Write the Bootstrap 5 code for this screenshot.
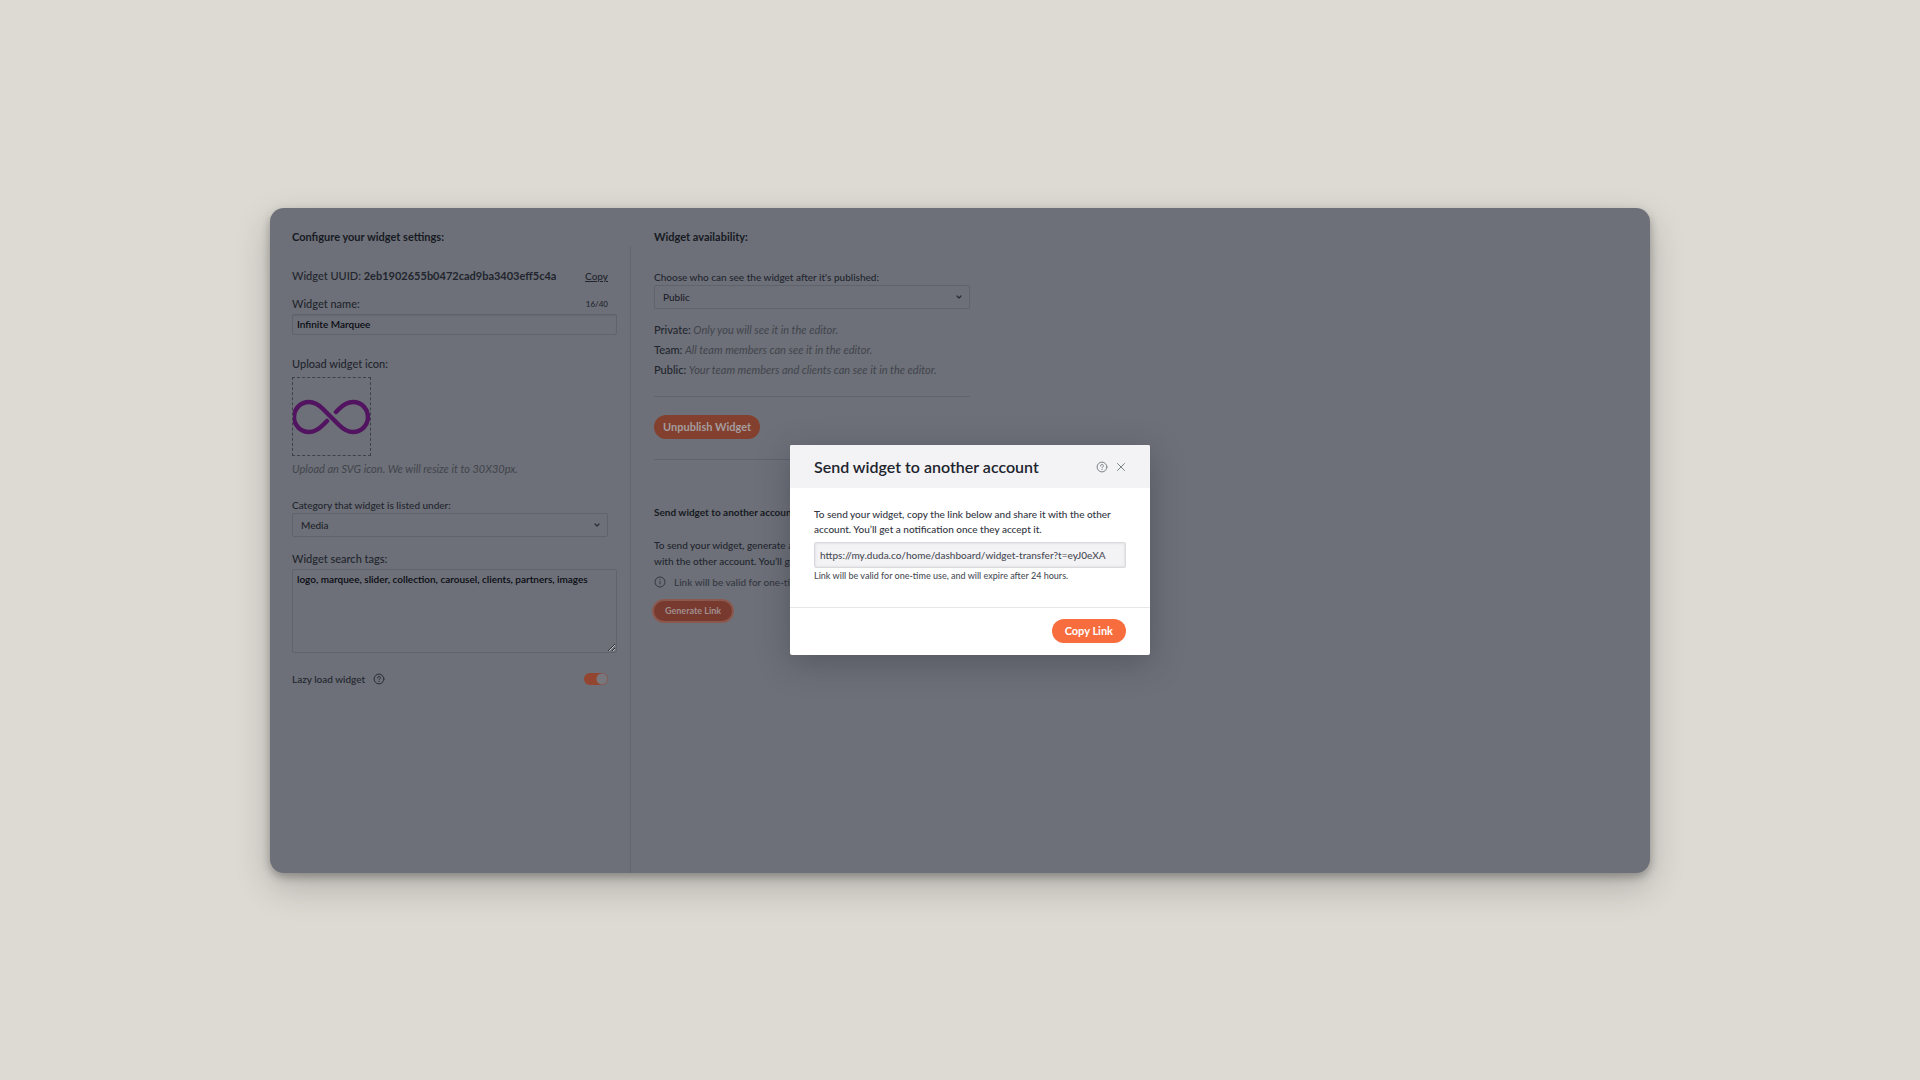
<!DOCTYPE html>
<html lang="en">
<head>
<meta charset="utf-8">
<meta name="viewport" content="width=device-width, initial-scale=1">
<title>Widget settings</title>
<link href="https://cdn.jsdelivr.net/npm/bootstrap@5.3.0/dist/css/bootstrap.min.css" rel="stylesheet">
<style>
  body { background: #dddad4; font-family: Lato, "Open Sans", sans-serif; font-size: 10px; line-height: 16px; font-weight: 500; color: #22252e; }
  .panel { max-width: 1380px; min-height: 665px; border-radius: 14px; background: #6d7078; box-shadow: 0 14px 36px rgba(0,0,0,.2), 0 4px 10px rgba(0,0,0,.28); }
  .settings-col { width: 360px; padding: 21px 22px; }
  .avail-col { width: 339px; padding: 21px 0 22px 23px; }
  .divider { width: 1px; margin-top: 38px; background: #62666f; }
  .sect { font-size: 11px; line-height: 16px; font-weight: 700; margin: 0; color: #171a23; }
  .sect-sm { font-size: 10px; margin-top: 44px; }
  .lbl { font-size: 11px; line-height: 16px; }
  .uuid { margin-top: 23px; }
  .uuid b { font-weight: 700; }
  .uuid a { font-size: 10px; }
  .name-row { margin: 12px 0 2px; }
  .icon-label { margin: 21px 0 5px; }
  .drop-note { margin: 5px 0 20px; }
  .tags-label { margin: 14px 0 2px; }
  .lazy-row { margin-top: 18px; }
  .levels { margin: 13px 0 18px; }
  .narrow { width: 316px; }
  .fld { display: block; border: 1px solid #5f636c; border-radius: 2px; background-color: transparent; color: #090b12; font-size: 10px; line-height: 16px; font-weight: 600; padding: 1px 4px; }
  .fld-name { width: 325px; height: 21px; box-shadow: inset 0 1px 1px #646770; }
  .fld-tags { width: 325px; height: 84px; resize: vertical; }
  .picker { height: 24px; padding: 0 24px 0 8px; border: 1px solid #5f636c; border-radius: 2px; background-color: transparent; color: #1d2029; font-size: 10px; line-height: 16px; font-weight: 500; background-size: 8px; background-position: right 6px center;
    background-image: url("data:image/svg+xml,%3csvg xmlns='http://www.w3.org/2000/svg' viewBox='0 0 8 8'%3e%3cpath fill='none' stroke='%23292c36' stroke-width='1.2' stroke-linecap='round' stroke-linejoin='round' d='M2 3l2 2 2-2'/%3e%3c/svg%3e"); }
  .drop { width: 79px; height: 79px; border: 1px dashed #3d414b; }
  .drop svg { display: block; width: 77px; height: 77px; }
  .note { font-size: 11px; font-style: italic; font-weight: 400; color: #41444c; }
  .valid-line { color: #343741; }
  .rule { height: 1px; background: #5f636c; }
  .pill { border: 0; border-radius: 12px; font-size: 11px; line-height: 16px; font-weight: 700; padding: 4px 9px; }
  .pill-dim { background: #84402f; color: #a39d9e; margin: 18px 0 20px; }
  .pill-sm { border-radius: 10px; font-size: 9px; line-height: 12px; padding: 4px 11px; background: #78392f; color: #a08f8d; box-shadow: 0 0 0 2px #8b584e; margin-top: 11px; }
  .send-text { margin: 17px 0 5px; }
  .tiny { font-size: 8px; }
  .switch { appearance: none; width: 24px; height: 12px; border-radius: 6px; margin: 0; background: radial-gradient(circle at 18px 6px, #77777d 5px, transparent 6px) #94452f; }
  .scrim { padding: 20px 0 0 20px; }
  .dlg { width: 360px; border-radius: 2px; background: #fff; box-shadow: 0 8px 32px rgba(40,43,56,.35); color: #33363f; }
  .dlg-head { height: 43px; padding: 0 24px; background: #f3f3f5; border-radius: 2px 2px 0 0; }
  .dlg-title { font-size: 16px; line-height: 20px; font-weight: 600; color: #21242d; margin: 0; }
  .dlg-body { padding: 19px 24px; height: 119px; line-height: 15px; }
  .dlg-foot { padding: 11px 24px 12px; border-top: 1px solid #e6e7e9; }
  .link-box { width: 100%; height: 26px; border: 1px solid #d9dadd; border-radius: 2px; background: #f3f3f5; box-shadow: inset 0 0 2px 1px #e4e4e7; color: #4a4d56; font-size: 10px; font-weight: 500; padding: 0 5px; margin-top: 5px; }
  .hint { font-size: 9px; line-height: 12px; margin-top: 2px; color: #4c4f57; }
  .pill-go { background: #f76d3e; color: #fff; padding: 4px 13px; }
  .glyph-btn { border: 0; background: none; padding: 0; color: #7b8488; line-height: 0; }
</style>
</head>
<body>
<main class="min-vh-100 d-flex justify-content-center align-items-center">
  <div class="panel w-100 d-flex position-relative">
    <section class="settings-col flex-shrink-0">
      <h1 class="sect">Configure your widget settings:</h1>
      <div class="uuid narrow d-flex justify-content-between lbl">
        <span>Widget UUID: <b>2eb1902655b0472cad9ba3403eff5c4a</b></span>
        <a href="#" class="text-reset">Copy</a>
      </div>
      <div class="name-row narrow d-flex justify-content-between lbl">
        <label for="wname">Widget name:</label><span class="tiny">16/40</span>
      </div>
      <input id="wname" class="fld fld-name" type="text" value="Infinite Marquee">
      <div class="icon-label lbl">Upload widget icon:</div>
      <div class="drop">
        <svg viewBox="0 0 77 77" fill="none" stroke="#521460" stroke-width="4.5" stroke-linecap="round" role="img" aria-label="Infinity icon">
          <path d="M34 43l-4 4c-3 3-7 7-14 7a14.500 14.500 0 0 1 0-30c6 0 10 3 14 7l16 16c4 4 8 7 14 7a14.500 14.500 0 0 0 0-30c-7 0-11 4-14 7l-3 3"/>
        </svg>
      </div>
      <div class="note drop-note">Upload an SVG icon. We will resize it to 30X30px.</div>
      <label class="d-block" for="cat">Category that widget is listed under:</label>
      <select id="cat" class="form-select picker narrow"><option>Media</option></select>
      <label class="tags-label lbl d-block" for="tags">Widget search tags:</label>
      <textarea id="tags" class="fld fld-tags">logo, marquee, slider, collection, carousel, clients, partners, images</textarea>
      <div class="lazy-row narrow d-flex justify-content-between align-items-center">
        <label class="d-flex align-items-center gap-2" for="lazy">Lazy load widget
          <svg width="12" height="12" viewBox="0 0 12 12" fill="none" stroke="#292c35" stroke-linecap="round"><circle cx="6" cy="6" r="4.9"/><path d="M4.6 4.900a1.400 1.400 0 1 1 2 1.200q-.6.2-.6.8M6 8.500v.1"/></svg>
        </label>
        <input id="lazy" class="switch" type="checkbox" role="switch" checked>
      </div>
    </section>
    <div class="divider flex-shrink-0"></div>
    <section class="avail-col flex-shrink-0">
      <h2 class="sect">Widget availability:</h2>
      <label class="d-block mt-4" for="who">Choose who can see the widget after it's published:</label>
      <select id="who" class="form-select picker w-100"><option>Public</option></select>
      <div class="levels d-flex flex-column gap-1">
        <div><span class="lbl">Private:</span> <span class="note">Only you will see it in the editor.</span></div>
        <div><span class="lbl">Team:</span> <span class="note">All team members can see it in the editor.</span></div>
        <div><span class="lbl">Public:</span> <span class="note">Your team members and clients can see it in the editor.</span></div>
      </div>
      <div class="rule"></div>
      <button class="pill pill-dim d-block" type="button">Unpublish Widget</button>
      <div class="rule"></div>
      <h2 class="sect sect-sm">Send widget to another account</h2>
      <p class="send-text">To send your widget, generate a link and share it<br>with the other account. You’ll get a notification.</p>
      <div class="valid-line d-flex align-items-center gap-2">
        <svg width="12" height="12" viewBox="0 0 12 12" fill="none" stroke="currentColor"><circle cx="6" cy="6" r="5"/><path d="M6 5.400v3M6 3.300v1"/></svg>
        Link will be valid for one-time use
      </div>
      <button class="pill pill-sm" type="button">Generate Link</button>
    </section>

    <div class="scrim position-absolute top-0 start-0 w-100 h-100 d-flex justify-content-center align-items-center">
      <div class="dlg" role="dialog" aria-labelledby="dlg-title">
        <div class="dlg-head d-flex align-items-center justify-content-between">
          <h2 id="dlg-title" class="dlg-title">Send widget to another account</h2>
          <div class="d-flex align-items-center gap-2">
            <button class="glyph-btn" type="button" aria-label="Help"><svg width="12" height="12" viewBox="0 0 12 12" fill="none" stroke="currentColor" stroke-linecap="round"><circle cx="6" cy="6" r="4.9"/><path d="M4.6 4.900a1.400 1.400 0 1 1 2 1.200q-.6.2-.6.8M6 8.500v.1"/></svg></button>
            <button class="glyph-btn" type="button" aria-label="Close"><svg width="10" height="10" viewBox="0 0 10 10" fill="none" stroke="currentColor" stroke-linecap="round"><path d="M1.5 1.500l7 7M8.500 1.500l-7 7"/></svg></button>
          </div>
        </div>
        <div class="dlg-body">
          <label for="link">To send your widget, copy the link below and share it with the other account. You’ll get a notification once they accept it.</label>
          <input id="link" class="link-box d-block" type="text" readonly value="https://my.duda.co/home/dashboard/widget-transfer?t=eyJ0eXA">
          <div class="hint">Link will be valid for one-time use, and will expire after 24 hours.</div>
        </div>
        <div class="dlg-foot d-flex justify-content-end">
          <button class="pill pill-go" type="button">Copy Link</button>
        </div>
      </div>
    </div>
  </div>
</main>
<script src="https://cdn.jsdelivr.net/npm/bootstrap@5.3.0/dist/js/bootstrap.bundle.min.js"></script>
</body>
</html>
